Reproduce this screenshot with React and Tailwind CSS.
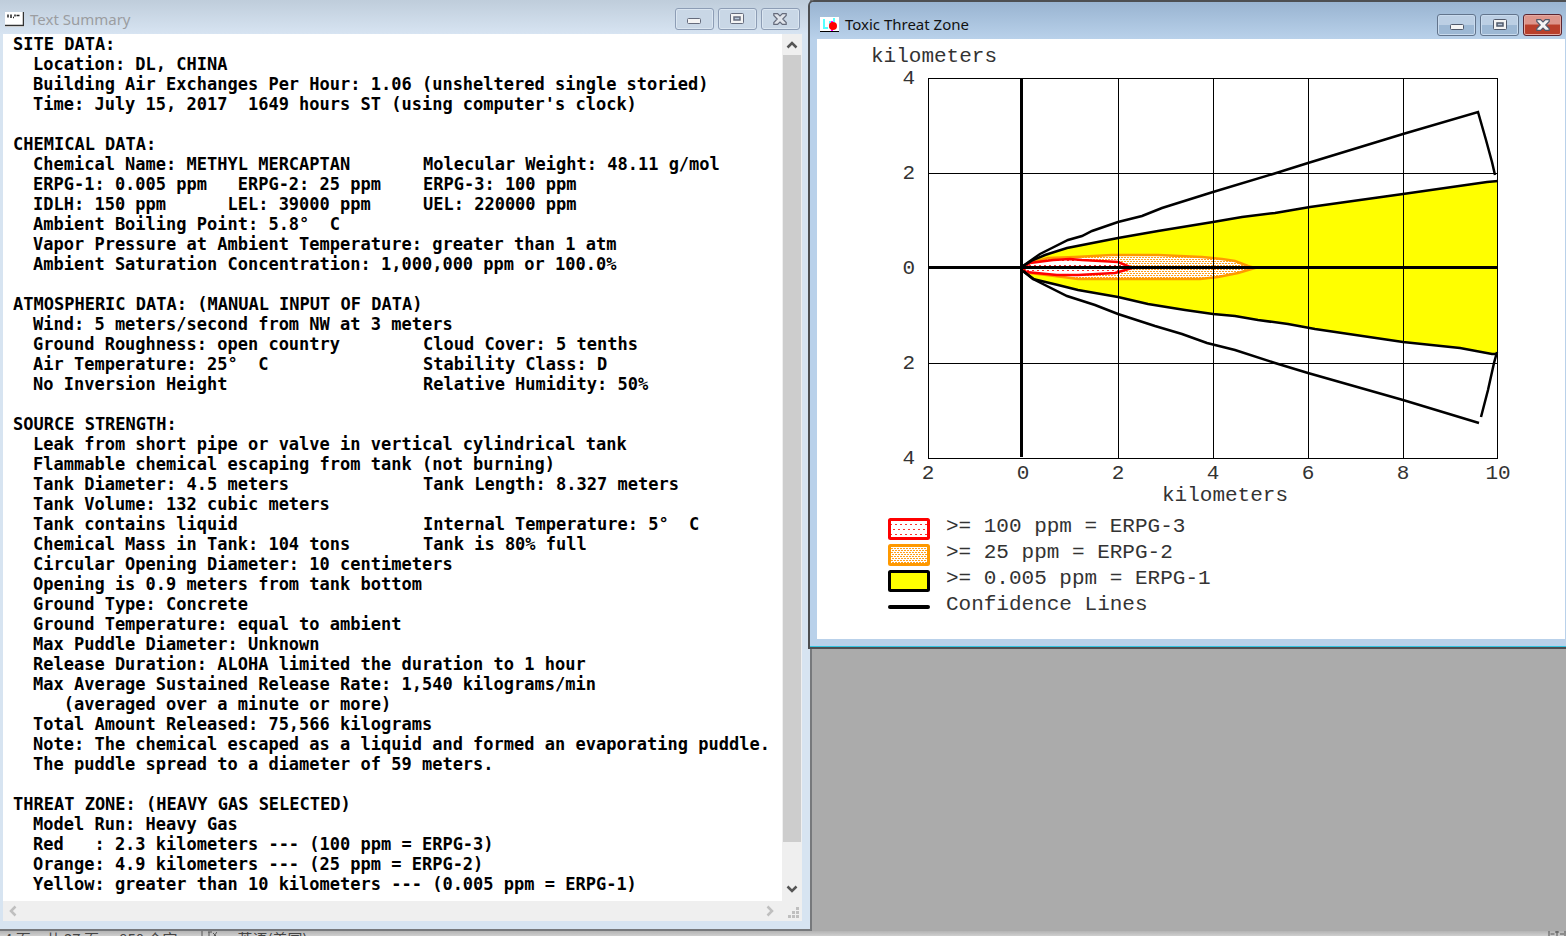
const SUMMARY = [
  {
    title: 'SITE DATA:',
    rows: [
      ['Location: DL, CHINA'],
      ['Building Air Exchanges Per Hour: 1.06 (unsheltered single storied)'],
      ["Time: July 15, 2017  1649 hours ST (using computer's clock)"],
    ],
  },
  {
    title: 'CHEMICAL DATA:',
    rows: [
      ['Chemical Name: METHYL MERCAPTAN', 'Molecular Weight: 48.11 g/mol'],
      ['ERPG-1: 0.005 ppm   ERPG-2: 25 ppm', 'ERPG-3: 100 ppm'],
      ['IDLH: 150 ppm      LEL: 39000 ppm', 'UEL: 220000 ppm'],
      ['Ambient Boiling Point: 5.8°  C'],
      ['Vapor Pressure at Ambient Temperature: greater than 1 atm'],
      ['Ambient Saturation Concentration: 1,000,000 ppm or 100.0%'],
    ],
  },
  {
    title: 'ATMOSPHERIC DATA: (MANUAL INPUT OF DATA)',
    rows: [
      ['Wind: 5 meters/second from NW at 3 meters'],
      ['Ground Roughness: open country', 'Cloud Cover: 5 tenths'],
      ['Air Temperature: 25°  C', 'Stability Class: D'],
      ['No Inversion Height', 'Relative Humidity: 50%'],
    ],
  },
  {
    title: 'SOURCE STRENGTH:',
    rows: [
      ['Leak from short pipe or valve in vertical cylindrical tank'],
      ['Flammable chemical escaping from tank (not burning)'],
      ['Tank Diameter: 4.5 meters', 'Tank Length: 8.327 meters'],
      ['Tank Volume: 132 cubic meters'],
      ['Tank contains liquid', 'Internal Temperature: 5°  C'],
      ['Chemical Mass in Tank: 104 tons', 'Tank is 80% full'],
      ['Circular Opening Diameter: 10 centimeters'],
      ['Opening is 0.9 meters from tank bottom'],
      ['Ground Type: Concrete'],
      ['Ground Temperature: equal to ambient'],
      ['Max Puddle Diameter: Unknown'],
      ['Release Duration: ALOHA limited the duration to 1 hour'],
      ['Max Average Sustained Release Rate: 1,540 kilograms/min'],
      ['   (averaged over a minute or more)'],
      ['Total Amount Released: 75,566 kilograms'],
      ['Note: The chemical escaped as a liquid and formed an evaporating puddle.'],
      ['The puddle spread to a diameter of 59 meters.'],
    ],
  },
  {
    title: 'THREAT ZONE: (HEAVY GAS SELECTED)',
    rows: [
      ['Model Run: Heavy Gas'],
      ['Red   : 2.3 kilometers --- (100 ppm = ERPG-3)'],
      ['Orange: 4.9 kilometers --- (25 ppm = ERPG-2)'],
      ['Yellow: greater than 10 kilometers --- (0.005 ppm = ERPG-1)'],
    ],
  },
];

const LEGEND = [
  { label: '>= 100 ppm = ERPG-3', stroke: '#ff0000', fill: 'url(#dots-red)' },
  { label: '>= 25 ppm = ERPG-2', stroke: '#ff9900', fill: 'url(#dots-orange)' },
  { label: '>= 0.005 ppm = ERPG-1', stroke: '#000000', fill: '#ffff00' },
  { label: 'Confidence Lines' },
];

const X_TICKS = [
  [111, '2'],
  [206, '0'],
  [301, '2'],
  [396, '4'],
  [491, '6'],
  [586, '8'],
  [681, '10'],
];

const Y_TICKS = [
  [39, '4'],
  [134, '2'],
  [229, '0'],
  [324, '2'],
  [419, '4'],
];

function WindowButton({ label, active, danger, children }) {
  let look = 'border-[#8d9db5] bg-[#c9d7e6] shadow-[inset_0_0_0_1px_#dbe6f1]';
  if (active) look = 'border-[#62748c] bg-linear-to-b from-[#bccfe4] from-50% to-[#9db8d4] to-50% shadow-[inset_0_0_0_1px_#c9dbee]';
  if (danger) look = 'border-[#5b2530] bg-linear-to-b from-[#dd958b] from-45% to-[#b93f2b] to-50% shadow-[inset_0_0_0_1px_#e5aaa2]';
  return (
    <button type="button" aria-label={label} className={`flex h-[22px] w-[39px] items-center justify-center rounded-[3px] border ${look}`}>
      {children}
    </button>
  );
}

function WindowButtons({ active }) {
  const ink = active ? '#50596b' : '#656b7c';
  return (
    <div className="flex gap-1">
      <WindowButton label="Minimize" active={active}>
        <svg width="14" height="14" viewBox="0 0 14 14">
          <rect x="0.5" y="6.5" width="13" height="5" rx="1" fill="#f4f4f4" stroke={ink} />
        </svg>
      </WindowButton>
      <WindowButton label="Maximize" active={active}>
        <svg width="14" height="12" viewBox="0 0 14 12">
          <rect x="0.5" y="0.5" width="13" height="10" rx="1" fill="#f4f4f4" stroke={ink} />
          <rect x="4" y="4" width="6" height="3" fill="#b9c9dc" stroke={ink} strokeWidth="1.5" />
        </svg>
      </WindowButton>
      <WindowButton label="Close" active={active} danger={active}>
        <svg width="14" height="12" viewBox="0 0 14 12">
          <path d="M0.8 0.600h3.800L7 3 9.400 0.600h3.800v1.800L9.800 6l3.400 3.600v1.800H9.400L7 9l-2.400 2.400H0.800V9.600L4.200 6 0.800 2.400z" fill={active ? '#f4f4f4' : '#dfe3ea'} stroke={ink} strokeWidth="1.2" />
        </svg>
      </WindowButton>
    </div>
  );
}

function Arrow({ dir, color }) {
  const paths = {
    up: 'M1.5 8.5 6 4l4.5 4.5',
    down: 'M1.5 3.5 6 8l4.5-4.5',
    left: 'M8.5 1.5 4 6l4.5 4.5',
    right: 'M3.5 1.5 8 6l-4.5 4.5',
  };
  return (
    <svg width="12" height="12" viewBox="0 0 12 12">
      <path d={paths[dir]} fill="none" stroke={color} strokeWidth="2.5" />
    </svg>
  );
}

function SummaryText() {
  return (
    <div className="min-w-0 flex-1 overflow-hidden bg-white pl-[10px] font-['DejaVu_Sans_Mono','Liberation_Mono',monospace] text-[17px] leading-5 font-bold whitespace-pre text-black">
      {SUMMARY.map((section) => (
        <section key={section.title} className="mb-5 last:mb-[6px]">
          <h2>{section.title}</h2>
          {section.rows.map(([left, right]) => (
            <div key={left} className="flex pl-5">
              <span className={right ? 'w-[390px]' : ''}>{left}</span>
              {right && <span>{right}</span>}
            </div>
          ))}
        </section>
      ))}
    </div>
  );
}

function TextSummaryWindow() {
  return (
    <section className="flex min-w-0 flex-[812] flex-col border-r-2 border-b-2 border-[#77797c] bg-[#d7e4f1]">
      <header className="flex h-[34px] shrink-0 items-center justify-between bg-linear-to-b from-[#bfcddb] to-[#d7e4f2] pt-1 pr-[10px] pl-[5px]">
        <div className="flex items-center gap-[6px]">
          <svg width="19" height="15" viewBox="0 0 19 15">
            <rect width="19" height="15" fill="#fff" />
            <path d="M0 13.5h18.500V0" fill="none" stroke="#333" strokeWidth="1.500" />
            <path d="M3 2.500v3M6 2.500v3.500M8 5.500h1M10 2.500v2M11.500 3.500h3" stroke="#222" strokeWidth="1.500" />
          </svg>
          <h1 className="font-['Noto_Sans','Open_Sans',sans-serif] text-[15px] text-[#9b9da1]">Text Summary</h1>
        </div>
        <WindowButtons />
      </header>
      <div className="mr-2 mb-2 ml-[3px] flex flex-1 flex-col bg-[#efefef]">
        <div className="flex flex-1">
          <SummaryText />
          <div className="flex w-[20px] shrink-0 flex-col items-center">
            <button type="button" aria-label="Scroll up" className="flex h-[21px] items-center">
              <Arrow dir="up" color="#555" />
            </button>
            <div className="w-[18px] flex-1 bg-[#cdcdcd]" />
            <button type="button" aria-label="Scroll down" className="flex h-[59px] items-end pb-[6px]">
              <Arrow dir="down" color="#555" />
            </button>
          </div>
        </div>
        <div className="flex h-5 shrink-0 items-center justify-between pl-1">
          <button type="button" aria-label="Scroll left">
            <Arrow dir="left" color="#bfbfbf" />
          </button>
          <div className="flex items-center gap-3 pr-[2px]">
            <button type="button" aria-label="Scroll right">
              <Arrow dir="right" color="#bfbfbf" />
            </button>
            <svg width="12" height="12" viewBox="0 0 12 12" className="mt-1">
              <path d="M8 0h3v3h-3zM4 4h3v3h-3zM8 4h3v3h-3zM0 8h3v3h-3zM4 8h3v3h-3zM8 8h3v3h-3z" fill="#bfbfbf" />
            </svg>
          </div>
        </div>
      </div>
    </section>
  );
}

function ThreatChart() {
  return (
    <svg width="748" height="469" viewBox="0 0 748 469" className="block font-['Liberation_Mono',monospace] text-[21px]" fill="#333">
      <defs>
        <pattern id="dots-red" width="5" height="10" patternUnits="userSpaceOnUse">
          <rect width="5" height="10" fill="#fff" />
          <rect x="0" y="1" width="2" height="1" fill="#ff3030" />
          <rect x="2" y="6" width="2" height="1" fill="#ff3030" />
        </pattern>
        <pattern id="dots-orange" width="3" height="4" patternUnits="userSpaceOnUse">
          <rect width="3" height="4" fill="#fff" />
          <rect x="0" y="0" width="2" height="1" fill="#ffa01f" />
          <rect x="1" y="2" width="2" height="1" fill="#ffa01f" />
        </pattern>
      </defs>

      {/* ERPG-1 zone */}
      <path
        d="M206 228 228 216 250 209 301 199 341 192 396 183 425 178 458 174 493 168 543 161 586 155 656 145 681 142V315L675 315 643 309 586 303 498 290 471 285 441 281 418 277 396 275 368 271 331 265 301 258 261 251 241 246 216 240 206 232z"
        fill="#ff0"
      />
      {/* ERPG-2 zone */}
      <path
        d="M206 229 213 224 231 219 258 218 295 216 341 216 385 218 405 220 418 222 431 227 438 229 421 234 401 238 383 240 340 240 261 240 246 238 213 234z"
        fill="url(#dots-orange)"
        stroke="#f90"
        strokeWidth="2.5"
      />
      {/* ERPG-3 zone */}
      <path
        d="M206 229 213 224 236 221 253 220 265 221 301 223 313 228 315 229 305 232 298 234 261 236 240 236 209 233z"
        fill="url(#dots-red)"
        stroke="#f00"
        strokeWidth="2.5"
      />

      <g stroke="#000" fill="none" strokeWidth="1" shapeRendering="crispEdges">
        <path d="M111.500 39.500H681M111.500 134.500H681M111.500 324.500H681M111.500 419.500H681" />
        <path d="M111.500 39V420M301.500 39V420M396.500 39V420M491.500 39V420M586.500 39V420M680.500 39V420" />
        <path d="M111 228.500H681M204.500 39V418" strokeWidth="3" />
      </g>

      <g stroke="#000" fill="none" strokeWidth="2.500">
        <path d="M206 227 216 221 228 216 250 209 301 199 341 192 396 183 425 178 458 174 493 168 543 161 586 155 656 145 670 143 681 142" />
        <path d="M206 232 216 240 241 246 261 251 301 258 331 265 368 271 396 275 418 277 441 281 471 285 498 290 586 303 643 309 675 315 681 315" />
        <path d="M206 227 223 215 251 201 265 197 275 192 301 183 325 177 345 169 396 153 456 135 491 124 586 95 661 73 669 101 675 123 678 136" />
        <path d="M206 232 218 241 250 257 278 266 301 275 338 287 365 295 390 304 418 311 458 324 491 334 586 361 662 384" />
        <path d="M664 378 671 351 677 324 680 313" />
      </g>

      <text x="54" y="23">kilometers</text>
      {Y_TICKS.map(([y, label]) => (
        <text key={y} x="98" y={y + 6} textAnchor="end">{label}</text>
      ))}
      {X_TICKS.map(([x, label]) => (
        <text key={x} x={x} y="440" textAnchor="middle">{label}</text>
      ))}
      <text x="408" y="462" textAnchor="middle">kilometers</text>
    </svg>
  );
}

function Legend() {
  return (
    <ul className="mt-[6px] pl-[71px] font-['Liberation_Mono',monospace] text-[21px] leading-[26px] text-[#333]">
      {LEGEND.map((item) => (
        <li key={item.label} className="flex h-[26px] items-start gap-4">
          <svg width="42" height="22" viewBox="0 0 42 22" className="mt-1 shrink-0">
            {item.fill ? (
              <rect x="1.500" y="1.500" width="39" height="19" rx="1" fill={item.fill} stroke={item.stroke} strokeWidth="3" />
            ) : (
              <path d="M2 11h38" stroke="#000" strokeWidth="4" strokeLinecap="round" />
            )}
          </svg>
          <span>{item.label}</span>
        </li>
      ))}
    </ul>
  );
}

function ThreatZoneWindow() {
  return (
    <section className="relative -ml-1 min-w-0 flex-[758] self-start rounded-tl-md border-t-2 border-b-2 border-l-2 border-[#4d4f52] bg-[#b9d1ea]">
      <div className="rounded-tl border-b border-[#35c4e0]">
        <header className="flex h-[37px] items-center justify-between rounded-tl bg-linear-to-b from-[#99b4d1] to-[#b9d1ea] pt-2 pr-1 pl-[10px]">
          <div className="flex items-center gap-[6px]">
            <svg width="19" height="15" viewBox="0 0 19 15">
              <rect width="19" height="15" fill="#fff" />
              <path d="M4 2v9h4M10 4v7M14 1v4" fill="none" stroke="#5ff" strokeWidth="2" />
              <path d="M12 4v10" stroke="#f0f" strokeWidth="2" />
              <circle cx="13" cy="9" r="4" fill="#f00" />
              <path d="M0 14.500h19" stroke="#000" />
            </svg>
            <h1 className="font-['Noto_Sans','Open_Sans',sans-serif] text-[15px] text-[#111]">Toxic Threat Zone</h1>
          </div>
          <WindowButtons active />
        </header>
        <div className="mr-px mb-[7px] ml-[7px] overflow-hidden bg-white pb-[21px]">
          <ThreatChart />
          <Legend />
        </div>
      </div>
    </section>
  );
}

export default function App() {
  return (
    <div className="flex h-screen flex-col overflow-hidden bg-[#ababab]">
      <main className="flex flex-1">
        <TextSummaryWindow />
        <ThreatZoneWindow />
      </main>
      <footer className="flex h-[5px] shrink-0 items-start justify-between overflow-hidden bg-linear-to-b from-[#b4b4b4] to-[#cfcfcf] font-['Noto_Sans_CJK_SC',sans-serif] text-[15px] leading-4 text-[#444]">
        <div className="flex gap-5 pl-1">
          <span>4 页，共 37 页</span>
          <span>850 个字</span>
          <svg width="16" height="5" viewBox="0 0 16 5" className="ml-1">
            <path d="M1 0v5M7 1h4M8 1v4M13 5l3-4M12 2l3 3" stroke="#555" fill="none" />
          </svg>
          <span>英语(美国)</span>
        </div>
        <svg width="18" height="5" viewBox="0 0 18 5">
          <path d="M1 0v5M2.500 3h4M7 1h4M9 0v5M12 3h4M17 0v5" stroke="#555" strokeWidth="1" />
        </svg>
      </footer>
    </div>
  );
}
